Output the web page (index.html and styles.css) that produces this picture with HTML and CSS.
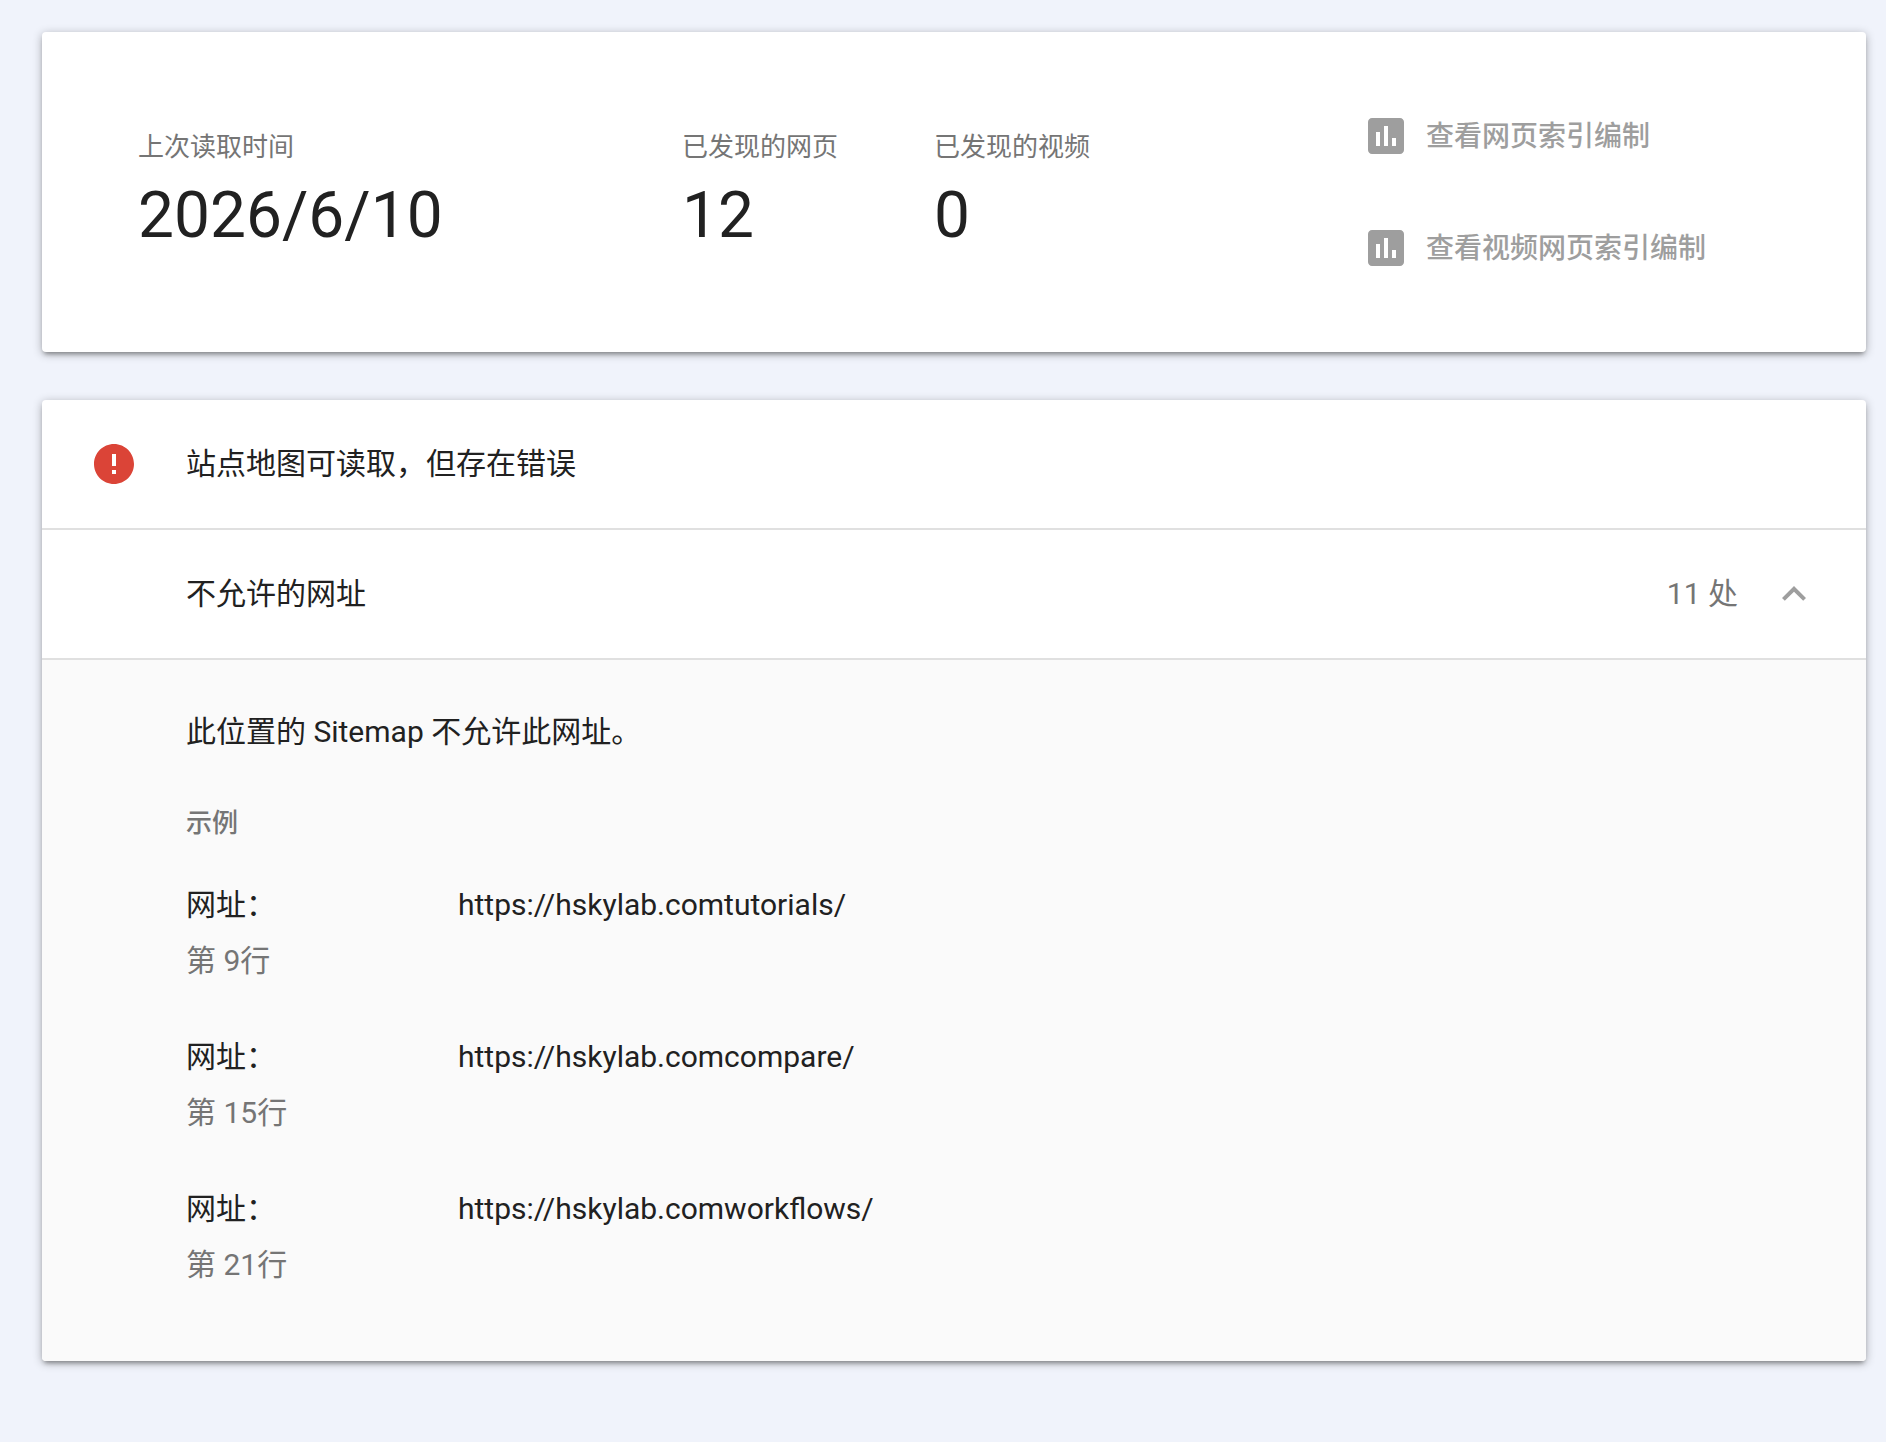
FILE: index.html
```
<!DOCTYPE html>
<html lang="zh-CN">
<head>
    <meta charset="UTF-8">
    <meta name="viewport" content="width=device-width, initial-scale=1.0">
    <title>站点地图</title>
    <link rel="stylesheet" href="styles.css">
</head>
<body>
    <section class="card summary">
        <div class="stat stat-date">
            <div class="stat-label">上次读取时间</div>
            <div class="stat-value">2026/6/10</div>
        </div>
        <div class="stat stat-pages">
            <div class="stat-label">已发现的网页</div>
            <div class="stat-value">12</div>
        </div>
        <div class="stat stat-videos">
            <div class="stat-label">已发现的视频</div>
            <div class="stat-value">0</div>
        </div>
        <div class="links">
            <div class="link">
                <svg class="icon" viewBox="0 0 24 24"><path d="M19 3H5c-1.1 0-2 .9-2 2v14c0 1.1.9 2 2 2h14c1.1 0 2-.9 2-2V5c0-1.1-.9-2-2-2zM9 17H7v-7h2v7zm4 0h-2V7h2v10zm4 0h-2v-4h2v4z"/></svg>
                <span class="link-text">查看网页索引编制</span>
            </div>
            <div class="link">
                <svg class="icon" viewBox="0 0 24 24"><path d="M19 3H5c-1.1 0-2 .9-2 2v14c0 1.1.9 2 2 2h14c1.1 0 2-.9 2-2V5c0-1.1-.9-2-2-2zM9 17H7v-7h2v7zm4 0h-2V7h2v10zm4 0h-2v-4h2v4z"/></svg>
                <span class="link-text">查看视频网页索引编制</span>
            </div>
        </div>
    </section>

    <section class="card report">
        <div class="row">
            <svg class="icon icon-error" viewBox="0 0 24 24"><path d="M12 2C6.48 2 2 6.48 2 12s4.48 10 10 10 10-4.48 10-10S17.52 2 12 2zm1 15h-2v-2h2v2zm0-4h-2V7h2v6z"/></svg>
            <span class="row-title">站点地图可读取，但存在错误</span>
        </div>
        <div class="row row-issue">
            <span class="row-title">不允许的网址</span>
            <span class="count">11 处</span>
            <svg class="icon icon-chevron" viewBox="0 0 24 24"><path d="M12 8l-6 6 1.41 1.41L12 10.83l4.59 4.58L18 14z"/></svg>
        </div>
        <div class="details">
            <p class="description">此位置的 Sitemap 不允许此网址。</p>
            <h3 class="examples-title">示例</h3>
            <div class="example">
                <div class="key">网址：</div>
                <div class="url">https://hskylab.comtutorials/</div>
                <div class="line">第 9行</div>
            </div>
            <div class="example">
                <div class="key">网址：</div>
                <div class="url">https://hskylab.comcompare/</div>
                <div class="line">第 15行</div>
            </div>
            <div class="example">
                <div class="key">网址：</div>
                <div class="url">https://hskylab.comworkflows/</div>
                <div class="line">第 21行</div>
            </div>
        </div>
    </section>
</body>
</html>
```
FILE: styles.css
```
* {
    box-sizing: border-box;
}
body {
    margin: 0;
    min-height: 100vh;
    padding: 32px 20px 80px 42px;
    background: #f0f3fb;
    color: #212121;
    font-family: Roboto, "Noto Sans CJK SC", sans-serif;
    font-size: 30px;
    line-height: 40px;
}
.card {
    background: #fff;
    border-radius: 4px;
    box-shadow: 0 4px 4px -2px rgba(0, 0, 0, 0.3), 0 2px 10px rgba(0, 0, 0, 0.3);
    overflow: hidden;
}
.icon {
    width: 48px;
    height: 48px;
    fill: #9e9e9e;
    flex: none;
}

/* 概览 */
.summary {
    display: flex;
    height: 320px;
    margin-bottom: 48px;
    padding: 80px 0 0 96px;
}
.stat {
    padding-top: 15px;
}
.stat-date {
    width: 544px;
}
.stat-pages {
    width: 252px;
}
.stat-videos {
    width: 428px;
}
.stat-label {
    color: #757575;
    font-size: 26px;
    line-height: 40px;
}
.stat-value {
    font-size: 64px;
    line-height: 76px;
    margin-top: 11px;
}
.links {
    display: flex;
    flex-direction: column;
    gap: 64px;
}
.link {
    display: flex;
    align-items: center;
    gap: 16px;
    color: #9e9e9e;
    font-size: 28px;
    font-weight: 500;
}
.link-text {
    padding-top: 2px;
}

/* 错误详情 */
.row {
    display: flex;
    align-items: center;
    height: 130px;
    padding: 0 48px;
    border-bottom: 2px solid #e0e0e0;
}
.row-issue {
    padding: 0 48px 0 144px;
}
.icon-error {
    fill: #db4437;
    margin-right: 48px;
}
.count {
    margin-left: auto;
    margin-right: 32px;
    color: #757575;
}
.details {
    height: 701px;
    padding: 52px 144px 0;
    background: #fafafa;
}
.description {
    margin: 0;
}
.examples-title {
    margin: 51px 0 42px;
    color: #757575;
    font-size: 26px;
    font-weight: 500;
}
.example {
    display: grid;
    grid-template-columns: 272px 1fr;
    row-gap: 16px;
    margin-bottom: 56px;
}
.line {
    color: #757575;
}
```
